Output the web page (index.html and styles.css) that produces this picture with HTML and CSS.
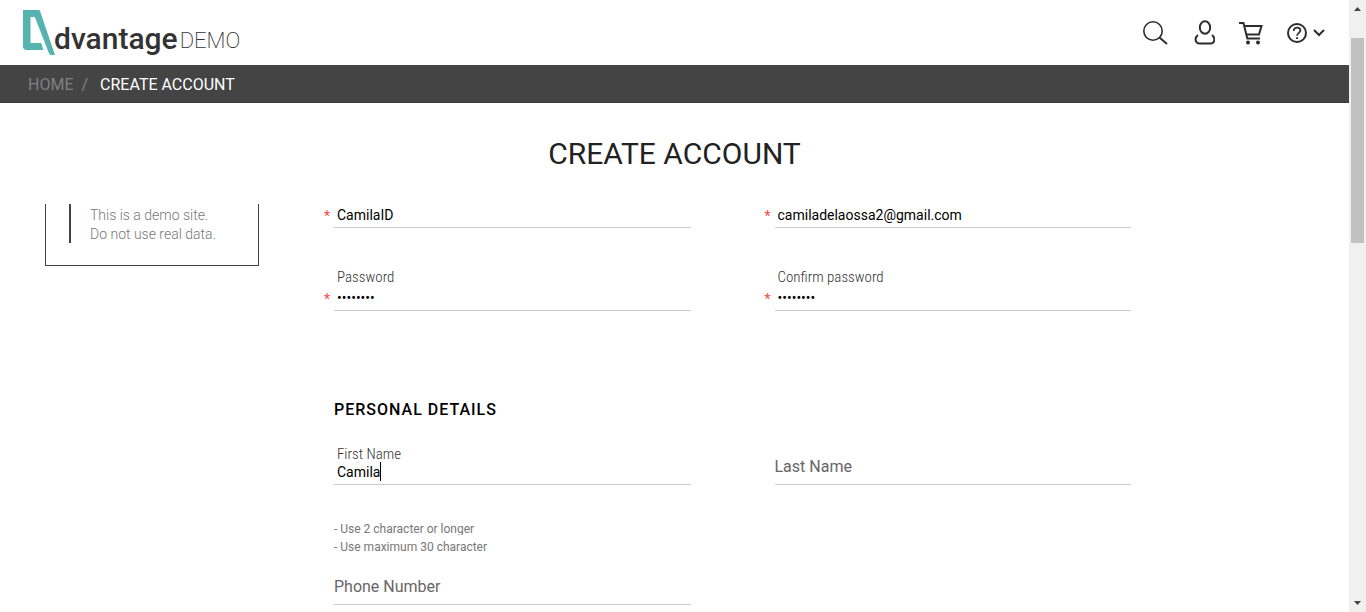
FILE: index.html
```html
<!DOCTYPE html>
<html lang="en">
<head>
<meta charset="utf-8">
<meta name="viewport" content="width=device-width, initial-scale=1">
<title>Advantage DEMO - Create Account</title>
<link rel="stylesheet" href="styles.css">
</head>
<body>
<div class="page">
  <header class="header">
    <a class="logo" href="#">
      <svg class="logo-mark" viewBox="0 0 32 46" width="32" height="46" aria-hidden="true"><path fill="#55b4af" fill-rule="evenodd" d="M0 0H15.500C16.300 0 16.800.4 17.100 1.200L32 45H29C27.300 45 26.500 44.500 26 43.200L11.800 7H7.500V33H17.200C18 33 18.400 33.300 18.700 34.200L20.300 40H3.500C1.200 40 0 38.800 0 36.500Z"/></svg>
      <span class="logo-name">dvantage</span><span class="logo-demo">DEMO</span>
    </a>
    <nav class="tools" aria-label="Account tools">
      <button class="tool" type="button" aria-label="Search"><svg viewBox="0 0 26 26" width="26" height="26"><circle cx="10" cy="11" r="9.200" stroke-width="1.600"/><path d="M16.500 17.500L24 24" stroke-width="2"/></svg></button>
      <button class="tool" type="button" aria-label="User"><svg viewBox="-1 0 22 26" width="22" height="26"><ellipse cx="11" cy="7.500" rx="5.200" ry="6.300" stroke-width="2"/><path d="M4 15C1.500 17 1.500 20 2 21.300C2.500 22.800 3.800 23.600 5.500 23.600H16.500C18.200 23.600 19.500 22.800 20 21.300C20.500 20 20.500 17 18 15" stroke-width="2"/></svg></button>
      <button class="tool" type="button" aria-label="Shopping cart"><svg viewBox="0 0 24 24" width="24" height="24"><path d="M0 2H4.500L8.300 17.500H21M5 5H22.500L20 13.500H7.500" stroke-width="2"/><circle class="solid" cx="9" cy="21.500" r="2"/><circle class="solid" cx="19" cy="21.500" r="2"/></svg></button>
      <button class="tool tool-help" type="button" aria-label="Help"><svg viewBox="0 0 38 22" width="38" height="22"><circle cx="10" cy="11" r="9" stroke-width="2"/><path d="M6.800 8.900C6.800 6.800 8.200 5.600 10.100 5.600C12 5.600 13.400 6.800 13.400 8.500C13.400 10.800 10.100 11 10.100 13.700" stroke-width="1.800"/><path d="M9.100 15.200H11.100V17H9.100Z" class="solid"/><path d="M27 8L32 13L37 8" stroke-width="2"/></svg></button>
    </nav>
  </header>
  <nav class="crumbs" aria-label="Breadcrumb"><a href="#">HOME</a><span class="slash">/</span><span class="current">CREATE ACCOUNT</span></nav>
  <h1 class="title">CREATE ACCOUNT</h1>
  <main class="content">
    <aside class="notice"><p>This is a demo site.<br>Do not use real data.</p></aside>
    <form class="form">
      <div class="field required">
        <input type="text" value="CamilaID" aria-label="Username">
      </div>
      <div class="field required">
        <input type="email" value="camiladelaossa2@gmail.com" aria-label="Email">
      </div>
      <div class="field required secret">
        <label for="password">Password</label>
        <input id="password" type="password" value="camila12">
      </div>
      <div class="field required secret">
        <label for="confirm">Confirm password</label>
        <input id="confirm" type="password" value="camila12">
      </div>
      <h2 class="section">PERSONAL DETAILS</h2>
      <div class="field">
        <label for="first">First Name</label>
        <input id="first" type="text" value="Camila">
        <span class="caret"></span>
      </div>
      <div class="field">
        <input class="empty" type="text" placeholder="Last Name" aria-label="Last Name">
      </div>
      <ul class="hints">
        <li>- Use 2 character or longer</li>
        <li>- Use maximum 30 character</li>
      </ul>
      <div class="field phone">
        <input class="empty" type="tel" placeholder="Phone Number" aria-label="Phone Number">
      </div>
    </form>
  </main>
</div>
<div class="scrollbar" aria-hidden="true">
  <svg viewBox="0 0 7 4" width="7" height="4"><path d="M0 4L3.500 0L7 4Z"/></svg>
  <div class="track"><div class="thumb"></div></div>
  <svg viewBox="0 0 7 4" width="7" height="4"><path d="M0 0L3.500 4L7 0Z"/></svg>
</div>
</body>
</html>
```
FILE: styles.css
```css
* { box-sizing: border-box; }

body {
  margin: 0;
  height: 100vh;
  display: grid;
  grid-template-columns: minmax(0, 1fr) 17px;
  overflow: hidden;
  background: #fff;
  color: #000;
  font-family: Roboto, "Liberation Sans", sans-serif;
}

.page { overflow: hidden; }

.header {
  height: 65px;
  display: flex;
  justify-content: space-between;
  align-items: center;
  padding: 0 24px 0 23px;
}

.logo {
  display: flex;
  align-items: center;
  color: #333;
  text-decoration: none;
}
.logo-mark { margin-right: -1px; }
.logo-name {
  font-size: 30px;
  font-weight: 500;
  line-height: 36px;
  padding-top: 12px;
}
.logo-demo {
  font-size: 22px;
  font-weight: 200;
  line-height: 36px;
  padding: 17px 0 0 2px;
}

.tools { display: flex; align-items: center; gap: 24px; }
.tool {
  display: flex;
  padding: 0;
  border: 0;
  background: none;
}
.tool svg { fill: none; stroke: #2d2d2d; }
.tool .solid { fill: #2d2d2d; stroke: none; }

.crumbs {
  height: 38px;
  display: flex;
  align-items: center;
  padding: 2px 0 0 28px;
  background: #444;
  border-bottom: 1px solid #3a3a3a;
  font-size: 16px;
}
.crumbs a { color: #808080; text-decoration: none; }
.slash { color: #808080; margin: 0 12px 0 8px; }
.current { color: #fff; }

.title {
  margin: 0;
  padding-top: 32px;
  height: 101px;
  text-align: center;
  color: #222;
  font-size: 30px;
  line-height: 38px;
  font-weight: 400;
}

.content {
  display: grid;
  grid-template-columns: 214px minmax(0, 1fr);
  gap: 65px;
  align-items: start;
  padding: 0 218px 0 45px;
}

.notice {
  padding: 0 0 22px 23px;
  border: 1px solid #444;
  border-top: 0;
}
.notice p {
  margin: 0;
  padding: 2px 0 0 19px;
  height: 39px;
  border-left: 2px solid #444;
  color: #777;
  font-size: 14px;
  line-height: 19px;
  font-weight: 300;
}

.form {
  display: grid;
  grid-template-columns: 1fr 1fr;
  column-gap: 74px;
  align-items: end;
}
.field {
  position: relative;
  display: grid;
  grid-template-columns: 10px minmax(0, 1fr);
}
.field label {
  grid-column: 2;
  padding-left: 3px;
  color: #333;
  font-family: "Roboto Condensed", Roboto, sans-serif;
  font-size: 15px;
  font-weight: 300;
  line-height: 14px;
}
.field input {
  grid-column: 2;
  width: 100%;
  height: 24px;
  padding: 0 3px 2px;
  border: 0;
  border-bottom: 1px solid #ccc;
  background: none;
  color: #000;
  font-family: inherit;
  font-size: 14px;
  outline: 0;
}
.field .empty { height: 37px; padding: 0; font-size: 16px; }
.empty::placeholder { color: #666; }
.required::before {
  content: "*";
  grid-column: 1;
  grid-row: 1;
  color: #f44;
  font-size: 14px;
  line-height: 24px;
}
.secret::before { grid-row: 2; }
.secret { margin-top: 42px; }
.secret label { padding-bottom: 3px; }

.section {
  grid-column: 1 / -1;
  margin: 89px 0 27px 10px;
  font-size: 16px;
  line-height: 20px;
  font-weight: 500;
  letter-spacing: 1px;
}
.caret {
  position: absolute;
  left: 56px;
  bottom: 4px;
  width: 1px;
  height: 19px;
  background: #000;
}
.hints {
  grid-column: 1;
  margin: 38px 0 0 10px;
  padding: 0;
  list-style: none;
  color: #777;
  font-size: 12px;
}
.hints li {
  height: 12px;
  margin-bottom: 6px;
  line-height: 13px;
  overflow: hidden;
}
.phone { grid-column: 1; margin-top: 9px; }

.scrollbar {
  display: flex;
  flex-direction: column;
  align-items: center;
  padding: 7px 0;
  background: #f0f0f0;
}
.scrollbar svg { fill: #444; }
.track {
  flex: 1;
  width: 13px;
  padding: 27px 0 0;
}
.thumb { height: 36.5%; background: #c1c1c1; }
```
